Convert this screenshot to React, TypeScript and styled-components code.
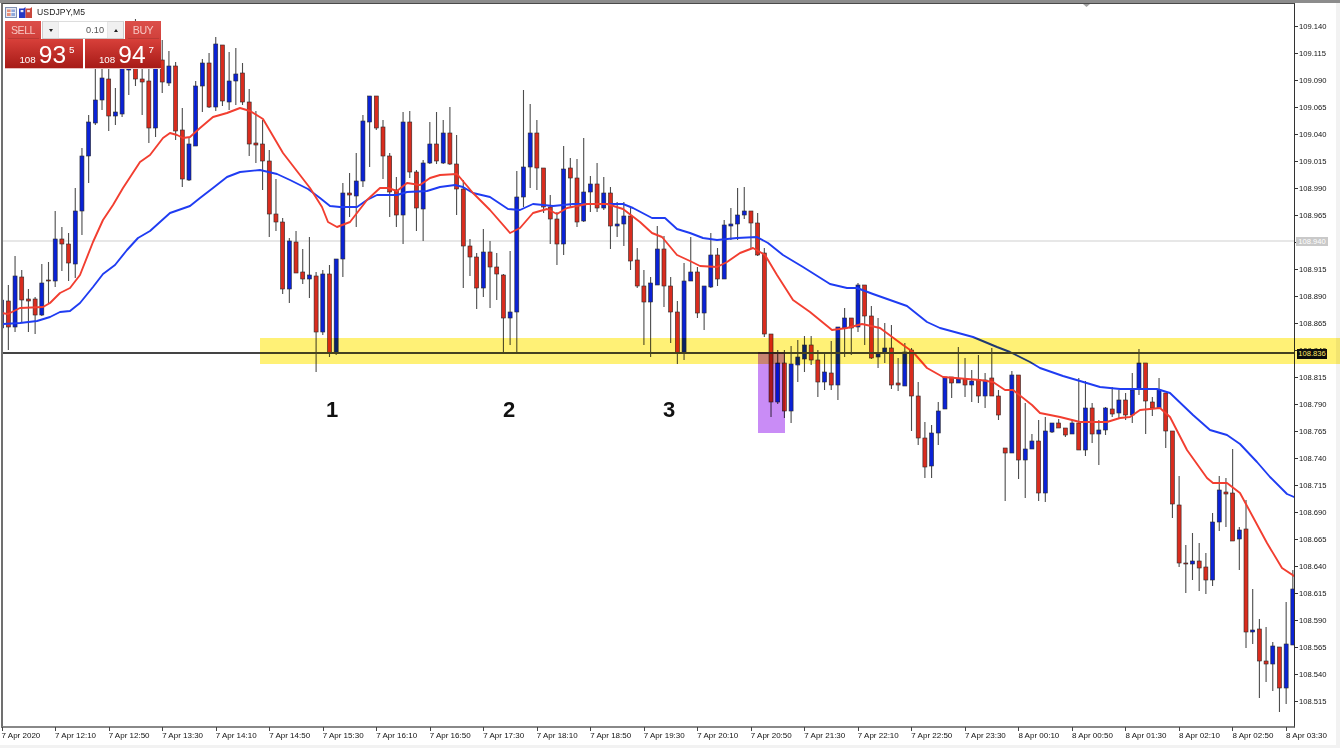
import React from "react";
import styled, { createGlobalStyle } from "styled-components";

const Global = createGlobalStyle`
  html, body { margin: 0; padding: 0; background: #f2f2f2; }
  #root { width: 1340px; height: 748px; overflow: hidden; }
`;

type Candle = [number, number, number, number, number];
// high, body top, body bottom, low, 1 = blue (up) / 0 = red (down)
const candles: Candle[] = [
  [296,300,328,331,1],[285,301,327,350,0],[256,276,327,332,1],[270,277,300,322,0],[289,299,301,332,0],[297,299,315,334,0],
  [264,283,315,316,1],[262,280,281,303,0],[211,239,281,287,1],[227,239,244,271,0],[233,244,263,281,0],[188,211,264,278,1],
  [148,156,211,235,1],[115,122,156,183,1],[60,100,123,125,1],[60,78,100,110,1],[60,79,116,131,0],[88,112,116,125,1],
  [40,60,114,117,1],[30,55,70,95,1],[19,60,79,86,0],[50,79,82,115,0],[45,81,128,143,0],[40,60,128,137,1],
  [40,60,82,93,0],[51,66,83,86,1],[62,66,131,140,0],[108,130,179,187,0],[137,144,180,181,1],[81,86,146,146,1],
  [59,63,86,112,1],[53,63,107,108,0],[37,44,107,111,1],[45,45,101,106,0],[52,81,102,110,1],[48,74,81,105,1],
  [63,73,102,105,0],[89,102,144,156,0],[111,143,145,163,0],[120,144,161,190,0],[150,161,214,237,0],[179,214,222,231,0],
  [218,222,289,294,0],[238,241,289,303,1],[231,242,273,273,0],[249,272,279,284,0],[237,275,279,298,1],[272,276,332,372,0],
  [270,274,332,335,1],[265,274,353,357,0],[259,259,353,355,1],[183,193,259,277,1],[173,193,195,217,0],[153,181,196,227,1],
  [115,121,181,187,1],[96,96,122,167,1],[96,96,128,130,0],[120,127,156,179,0],[153,156,192,217,0],[177,190,215,227,0],
  [112,122,215,244,1],[111,122,172,178,0],[170,172,208,231,0],[160,163,209,241,1],[122,144,163,164,1],[112,144,161,164,0],
  [120,133,163,164,1],[107,133,164,165,0],[135,164,189,215,0],[180,189,246,288,0],[239,246,257,276,0],[253,257,288,309,0],
  [229,252,288,297,1],[241,252,267,308,0],[253,267,274,300,0],[274,275,318,353,0],[251,312,318,345,1],[171,197,312,353,1],
  [90,167,197,207,1],[104,133,167,188,1],[120,133,168,190,0],[168,168,207,213,0],[195,207,219,244,0],[212,219,244,265,0],
  [146,169,244,255,1],[158,168,178,207,0],[159,178,222,227,0],[138,192,221,222,1],[176,184,192,212,1],[163,184,208,212,0],
  [177,193,208,210,1],[187,193,226,249,0],[202,224,226,237,1],[202,216,224,246,1],[207,216,261,270,0],[248,260,286,288,0],
  [270,286,302,345,0],[277,283,302,357,1],[226,249,285,285,1],[236,249,286,307,0],[277,286,312,343,0],[301,312,353,364,0],
  [263,281,353,360,1],[237,272,281,281,1],[267,272,313,318,0],[286,286,313,330,1],[233,255,287,288,1],[248,255,279,286,0],
  [220,225,279,279,1],[208,224,226,240,1],[188,215,224,240,1],[187,211,215,219,1],[211,211,223,248,0],[213,223,255,256,0],
  [248,253,334,337,0],[334,334,402,417,0],[350,363,402,404,1],[350,363,411,418,0],[346,364,411,423,1],[340,357,365,382,1],
  [336,345,359,372,1],[336,345,360,365,0],[350,360,382,397,0],[353,372,382,390,1],[341,373,385,390,0],[327,327,385,400,1],
  [308,318,328,357,1],[318,318,328,355,0],[283,285,327,332,1],[285,285,316,345,0],[306,316,358,359,0],[318,353,357,368,1],
  [323,348,353,363,1],[325,348,385,389,0],[358,383,385,391,0],[343,352,386,386,1],[348,350,396,431,0],[382,396,438,445,0],
  [422,438,467,478,0],[425,433,466,478,1],[402,411,433,445,1],[377,377,409,409,1],[377,377,383,398,0],[347,379,383,383,1],
  [358,379,385,397,0],[370,381,385,402,1],[355,380,396,403,0],[373,380,396,408,1],[348,378,396,396,0],[390,396,415,420,0],
  [448,448,453,501,0],[371,375,453,453,1],[375,375,460,479,0],[403,449,460,498,1],[434,441,449,449,1],[420,441,493,501,0],
  [417,431,493,502,1],[423,423,432,433,1],[419,423,428,428,0],[428,428,435,437,0],[420,423,434,434,1],[378,423,450,450,0],
  [381,408,450,456,1],[403,408,434,443,0],[420,430,434,465,1],[407,408,430,435,1],[387,409,414,417,0],[390,400,413,418,1],
  [393,400,415,420,0],[373,390,415,423,1],[349,363,389,395,1],[363,363,401,434,0],[397,402,408,416,0],[378,390,408,408,1],
  [393,393,431,448,0],[431,431,504,518,0],[476,505,563,567,0],[545,563,564,593,0],[533,561,564,580,1],[543,561,568,591,0],
  [553,567,580,594,0],[513,522,580,586,1],[476,490,522,531,1],[478,492,494,527,0],[449,493,541,541,0],[527,530,539,570,1],
  [500,529,632,648,0],[589,630,632,644,1],[619,629,661,698,0],[627,661,664,682,0],[642,646,664,691,1],[647,647,688,712,0],
  [602,644,688,704,1],[570,589,645,645,1],
];

const bluePath = "3,324 20,323 37,321 50,317 60,312 70,311 80,303 93,287 103,274 115,265 127,250 138,238 150,231 170,213 190,206 200,198 213,188 227,177 240,172 260,170 277,174 290,180 308,189 320,198 330,206 340,207 357,207 367,200 377,195 397,195 407,192 427,191 440,187 455,185 463,187 473,193 490,197 508,209 520,210 533,204 553,206 573,204 593,204 623,204 633,208 652,218 665,218 677,229 690,233 703,238 717,240 737,238 757,237 768,243 783,255 803,267 830,284 847,288 857,288 873,294 907,306 927,322 940,328 973,337 997,347 1010,352 1030,362 1040,368 1063,376 1080,381 1100,387 1120,389 1157,389 1170,393 1193,415 1210,430 1227,435 1240,444 1257,462 1270,477 1287,494 1294,497";
const redPath = "2,313 8,314 20,308 43,307 50,303 60,293 70,288 80,275 93,242 103,220 113,205 123,188 140,162 150,155 163,138 170,133 177,135 183,138 190,137 200,128 213,117 227,113 240,108 250,111 263,119 283,153 310,188 322,207 328,222 337,227 350,222 367,200 380,188 388,188 397,191 407,183 420,185 430,178 440,175 457,174 473,193 490,210 510,233 520,228 533,213 547,209 557,214 567,208 587,204 607,204 623,209 640,222 652,233 662,237 677,255 690,261 700,266 717,267 727,262 740,253 753,248 765,255 777,275 793,300 810,312 832,330 847,328 862,324 880,328 903,345 913,352 927,368 943,377 980,380 993,382 1005,390 1013,390 1032,405 1040,413 1060,417 1080,422 1107,422 1120,418 1130,417 1140,410 1160,408 1170,417 1187,450 1207,478 1213,483 1227,483 1240,493 1267,543 1282,568 1294,576";

const priceLabels = ["109.140","109.115","109.090","109.065","109.040","109.015","108.990","108.965","108.940","108.915","108.890","108.865","108.840","108.815","108.790","108.765","108.740","108.715","108.690","108.665","108.640","108.615","108.590","108.565","108.540","108.515"];
const timeLabels = ["7 Apr 2020","7 Apr 12:10","7 Apr 12:50","7 Apr 13:30","7 Apr 14:10","7 Apr 14:50","7 Apr 15:30","7 Apr 16:10","7 Apr 16:50","7 Apr 17:30","7 Apr 18:10","7 Apr 18:50","7 Apr 19:30","7 Apr 20:10","7 Apr 20:50","7 Apr 21:30","7 Apr 22:10","7 Apr 22:50","7 Apr 23:30","8 Apr 00:10","8 Apr 00:50","8 Apr 01:30","8 Apr 02:10","8 Apr 02:50","8 Apr 03:30"];

const Page = styled.div`
  position: relative;
  width: 1340px;
  height: 748px;
  background: #f2f2f2;
  overflow: hidden;
  font-family: "Liberation Sans", Arial, sans-serif;
  filter: blur(0.3px);
`;
const TopStrip = styled.div`
  height: 3px;
  background: #8c8c8c;
`;
const Frame = styled.div`
  width: 1335px;
  height: 742px;
  padding-left: 1px;
  background: #fff;
  display: flex;
  flex-direction: column;
`;
const ChartRow = styled.div`
  display: flex;
  height: 725px;
`;
const Plot = styled.div`
  box-sizing: border-box;
  width: 1294px;
  height: 725px;
  border-style: solid;
  border-color: #4a4a4a #333 #888 #707070;
  border-width: 1px 1px 2px 2px;
`;
const ChartSvg = styled.svg`
  display: block;
  width: 1291px;
  height: 722px;
`;
const Wick = styled.rect`
  fill: #4d4d4d;
`;
const Body = styled.rect<{ $up: boolean }>`
  fill: ${(p) => (p.$up ? "#0a22d6" : "#d92c1e")};
  stroke: #2a2a2a;
  stroke-width: 0.6;
`;
const MaLine = styled.polyline<{ $color: string }>`
  fill: none;
  stroke: ${(p) => p.$color};
  stroke-width: 1.9;
  stroke-linejoin: round;
  stroke-linecap: round;
`;
const PriceAxis = styled.div`
  display: flex;
  flex-direction: column;
  padding-top: 9.5px;
`;
const PriceRow = styled.div`
  height: 27px;
  display: flex;
  align-items: center;
  gap: 1px;
  font-size: 7.6px;
  color: #111;
  &::before {
    content: "";
    width: 3px;
    height: 1px;
    background: #333;
  }
`;
const TimeAxis = styled.div`
  display: flex;
  padding-left: 0.6px;
`;
const TimeCell = styled.div`
  position: relative;
  flex: 0 0 53.52px;
  height: 17px;
  padding-top: 2px;
  box-sizing: border-box;
  font-size: 8px;
  line-height: 12px;
  color: #111;
  white-space: nowrap;
  &::before {
    content: "";
    position: absolute;
    left: 0;
    top: -1px;
    width: 1px;
    height: 4px;
    background: #444;
  }
`;
const YellowZone = styled.div`
  position: absolute;
  left: 260px;
  right: 0;
  top: 338px;
  height: 26px;
  background: #fff176;
  mix-blend-mode: multiply;
`;
const PurpleZone = styled.div`
  position: absolute;
  left: 758px;
  top: 352px;
  width: 27px;
  height: 81px;
  background: #c98cf6;
  mix-blend-mode: multiply;
`;
const AskTag = styled.div`
  position: absolute;
  left: 1296px;
  top: 237px;
  width: 32px;
  height: 9px;
  background: #c9c9c9;
  color: #fff;
  font-size: 7.6px;
  line-height: 9px;
  text-align: center;
`;
const LevelTag = styled.div`
  position: absolute;
  left: 1297px;
  top: 349px;
  width: 30px;
  height: 9.5px;
  background: #0c0c0c;
  color: #ffe866;
  font-size: 7.6px;
  line-height: 9.5px;
  text-align: center;
`;
const Mark = styled.span<{ $x: number }>`
  position: absolute;
  left: ${(p) => p.$x}px;
  top: 397px;
  font-size: 22px;
  line-height: 26px;
  font-weight: 700;
  color: #111;
`;
const Overlay = styled.div`
  position: absolute;
  left: 5px;
  top: 7px;
  width: 156px;
  display: flex;
  flex-direction: column;
`;
const TitleBar = styled.div`
  height: 14px;
  display: flex;
  align-items: flex-start;
  gap: 2px;
  font-size: 8.6px;
  line-height: 11px;
  color: #222;
`;
const TitleText = styled.span`
  margin-left: 3px;
  letter-spacing: 0.1px;
`;
const TradeTop = styled.div`
  display: flex;
  height: 18px;
  background: #fff;
`;
const SideButton = styled.div`
  flex: 0 0 36px;
  box-sizing: border-box;
  padding: 0 2.5px;
  background: linear-gradient(#dc4f4a, #d0403b);
`;
const SideLabel = styled.div`
  height: 18px;
  box-sizing: border-box;
  border-bottom: 1px solid #b93a35;
  color: #f6c6c2;
  font-size: 10.6px;
  line-height: 18px;
  text-align: center;
  transform-origin: center;
  letter-spacing: -0.5px;
`;
const LotBox = styled.div`
  flex: 1;
  margin: 0 1px;
  box-sizing: border-box;
  display: flex;
  align-items: stretch;
  background: #fff;
  border: 1px solid #c8c8c8;
  border-top-color: #ddd;
  font-size: 9.2px;
  color: #555;
`;
const LotStep = styled.div`
  flex: 0 0 15px;
  background: #f0f0f0;
  box-shadow: 0 0 0 0.5px #cfcfcf;
  display: flex;
  align-items: center;
  justify-content: center;
`;
const LotValue = styled.div`
  flex: 1;
  text-align: right;
  padding-right: 4px;
  line-height: 16px;
`;
const Arrow = styled.i<{ $up?: boolean }>`
  display: block;
  width: 0;
  height: 0;
  border-left: 2.5px solid transparent;
  border-right: 2.5px solid transparent;
  ${(p) => (p.$up ? "border-bottom: 3px solid #222;" : "border-top: 3px solid #222;")}
`;
const QuoteRow = styled.div`
  display: flex;
  gap: 2px;
  height: 30px;
  background: #fff;
`;
const Quote = styled.div<{ $pad: number }>`
  flex: 1;
  box-sizing: border-box;
  padding-right: ${(p) => p.$pad}px;
  display: flex;
  justify-content: flex-end;
  align-items: flex-end;
  background: linear-gradient(#d8403a, #a71b17);
  color: #fff;
  border-bottom: 1px solid #e8bcbc;
`;
const Big = styled.span`
  font-size: 9.8px;
  line-height: 11px;
  margin-bottom: 3px;
  margin-right: 3px;
`;
const Huge = styled.span`
  font-size: 24.5px;
  line-height: 24px;
  margin-bottom: 1px;
  margin-right: 3px;
`;
const Small = styled.span`
  align-self: flex-start;
  font-size: 9.8px;
  line-height: 10px;
  margin-top: 6px;
`;

const ChartIcons = () => (
  <>
    <svg width="12" height="11" viewBox="0 0 12 11">
      <rect x="0.5" y="0.5" width="11" height="10" fill="#e4e8f2" stroke="#8090b4" />
      <rect x="2" y="2.5" width="3.6" height="6.5" fill="#e88f76" />
      <rect x="6.4" y="2.5" width="3.6" height="6.5" fill="#8fa8dc" />
      <rect x="2" y="5" width="8" height="0.8" fill="#fff" />
    </svg>
    <svg width="13" height="11" viewBox="0 0 13 11">
      <path d="M0 1.5h4.5l2-1.5v11H0z" fill="#2438c4" />
      <rect x="1.6" y="3" width="2.8" height="2.2" fill="#e4eaf8" />
      <path d="M6.5 1.5h4.5l2-1.5v11H6.5z" fill="#c8473c" />
      <rect x="8.1" y="3" width="2.8" height="2.2" fill="#f4dcd8" />
    </svg>
  </>
);

const Chart = () => (
  <ChartSvg viewBox="3 4 1291 722">
    <line x1="3" x2="1294" y1="241" y2="241" stroke="#cfcfcf" strokeWidth="1" />
    {candles.map(([h, t, b, l, up], i) => {
      const x = 1.67 + 6.69 * i;
      return (
        <g key={i}>
          <Wick x={x - 0.55} y={h} width={1.1} height={l - h} />
          <Body $up={up === 1} x={x - 2} y={t} width={4} height={Math.max(b - t, 1)} />
        </g>
      );
    })}
    <MaLine $color="#1f3cf2" points={bluePath} />
    <MaLine $color="#f23e30" points={redPath} />
    <line x1="3" x2="1294" y1="353" y2="353" stroke="#444" strokeWidth="2" />
    <polygon points="1083,4 1090,4 1086.5,7" fill="#a0a0a0" />
  </ChartSvg>
);

export default function App() {
  return (
    <>
      <Global />
      <Page>
        <TopStrip />
        <Frame>
          <ChartRow>
            <Plot>
              <Chart />
            </Plot>
            <PriceAxis>
              {priceLabels.map((p) => (
                <PriceRow key={p}>{p}</PriceRow>
              ))}
            </PriceAxis>
          </ChartRow>
          <TimeAxis>
            {timeLabels.map((t) => (
              <TimeCell key={t}>{t}</TimeCell>
            ))}
          </TimeAxis>
        </Frame>
        <YellowZone />
        <PurpleZone />
        <AskTag>108.940</AskTag>
        <LevelTag>108.836</LevelTag>
        <Mark $x={326}>1</Mark>
        <Mark $x={503}>2</Mark>
        <Mark $x={663}>3</Mark>
        <Overlay>
          <TitleBar>
            <ChartIcons />
            <TitleText>USDJPY,M5</TitleText>
          </TitleBar>
          <TradeTop>
            <SideButton><SideLabel>SELL</SideLabel></SideButton>
            <LotBox>
              <LotStep><Arrow /></LotStep>
              <LotValue>0.10</LotValue>
              <LotStep><Arrow $up /></LotStep>
            </LotBox>
            <SideButton><SideLabel>BUY</SideLabel></SideButton>
          </TradeTop>
          <QuoteRow>
            <Quote $pad={8}>
              <Big>108</Big>
              <Huge>93</Huge>
              <Small>5</Small>
            </Quote>
            <Quote $pad={7}>
              <Big>108</Big>
              <Huge>94</Huge>
              <Small>7</Small>
            </Quote>
          </QuoteRow>
        </Overlay>
      </Page>
    </>
  );
}
